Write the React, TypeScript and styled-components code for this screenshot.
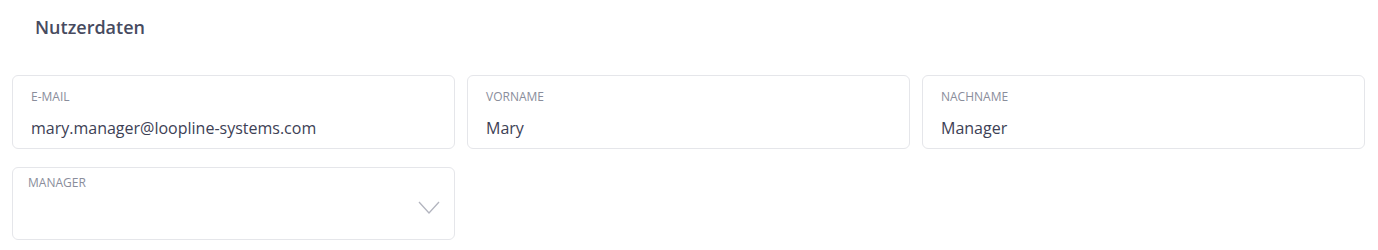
import React from "react"
import styled, { createGlobalStyle } from "styled-components"

const GlobalStyle = createGlobalStyle`
    body {
        margin: 0;
        background: #ffffff;
        font-family: "Open Sans", "Liberation Sans", sans-serif;
    }
`

const Section = styled.section`
    padding: 15px 13px 0 12px;
`

const Title = styled.h2`
    margin: 0 0 36px 23px;
    font-size: 18px;
    line-height: 24px;
    font-weight: 600;
    color: #474b5f;
`

const Grid = styled.div`
    display: grid;
    grid-template-columns: repeat(3, 1fr);
    column-gap: 12px;
    row-gap: 18px;
`

const Card = styled.div<{ $select?: boolean }>`
    position: relative;
    box-sizing: border-box;
    height: ${({ $select }) => ($select ? 73 : 74)}px;
    border: 1px solid #e5e6ea;
    border-radius: 6px;
    padding: ${({ $select }) => ($select ? "7px 15px" : "13px 18px 8px")};
    display: flex;
    flex-direction: column;
`

const Label = styled.label`
    font-size: 12px;
    line-height: 16px;
    color: #8a8d9b;
    text-transform: uppercase;
`

const Value = styled.div`
    margin-top: 12px;
    font-size: 16px;
    line-height: 22px;
    color: #3d4155;
`

const Chevron = styled.svg`
    position: absolute;
    right: 14px;
    top: 33px;
    width: 22px;
    height: 13px;
`

const Field = ({ label, value }: { label: string; value: string }) => (
    <Card>
        <Label>{label}</Label>
        <Value>{value}</Value>
    </Card>
)

const App = () => {
    return (
        <>
            <GlobalStyle />
            <Section>
                <Title>Nutzerdaten</Title>
                <Grid>
                    <Field label="E-Mail" value="mary.manager@loopline-systems.com" />
                    <Field label="Vorname" value="Mary" />
                    <Field label="Nachname" value="Manager" />
                    <Card $select>
                        <Label>Manager</Label>
                        <Chevron viewBox="0 0 22 13" fill="none">
                            <path d="M1 1 L11 12 L21 1" stroke="#b3b5bf" strokeWidth="1.3" />
                        </Chevron>
                    </Card>
                </Grid>
            </Section>
        </>
    )
}

export default App
